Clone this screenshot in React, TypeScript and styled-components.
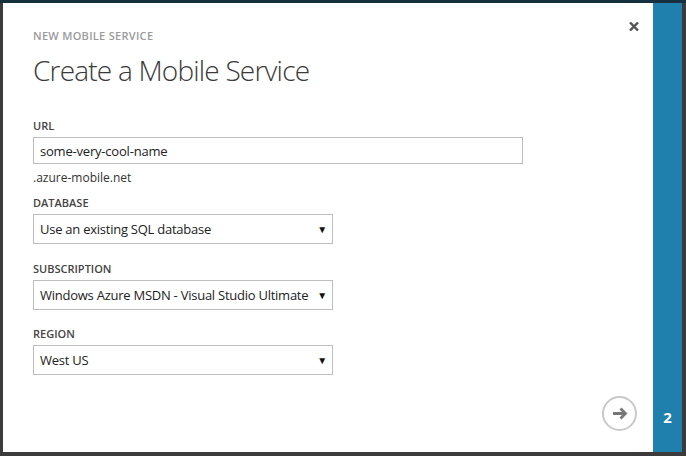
import React from "react";
import styled, { createGlobalStyle } from "styled-components";

const Global = createGlobalStyle`
  html, body { margin: 0; padding: 0; background: #3b3b3b; }
  body { font-family: "Open Sans", "Noto Sans", sans-serif; }
  * { box-sizing: border-box; }
`;

const Page = styled.div`
  width: 686px;
  height: 456px;
  border-top: 3px solid #16303f;
  padding: 0 4px 4px 3px;
  display: flex;
`;

const Modal = styled.div`
  flex: 1;
  display: flex;
  background: #ffffff;
`;

const Content = styled.div`
  flex: 1;
  display: flex;
  flex-direction: column;
  padding: 15px 16px 21px 30px;
`;

const Header = styled.div`
  display: flex;
  justify-content: space-between;
  align-items: flex-start;
`;

const TitleGroup = styled.div`
  padding-top: 10px;
  display: flex;
  flex-direction: column;
`;

const Eyebrow = styled.div`
  font-size: 11px;
  line-height: 16px;
  font-weight: 600;
  color: #9b9b9b;
  letter-spacing: 0.3px;
`;

const Heading = styled.h1`
  margin: 8px 0 0;
  font-size: 28px;
  line-height: 36px;
  font-weight: 300;
  letter-spacing: -0.8px;
  color: #3a3a3a;
`;

const Close = styled.button`
  width: 12px;
  height: 12px;
  margin: 2px -3px 0 0;
  padding: 0;
  border: 0;
  background: transparent;
  display: flex;
  align-items: center;
  justify-content: center;
  cursor: pointer;
`;

const Form = styled.div`
  margin-top: 30px;
  display: flex;
  flex-direction: column;
`;

const Label = styled.div<{ $gap?: number }>`
  margin-top: ${(p) => p.$gap ?? 0}px;
  font-size: 11px;
  line-height: 16px;
  font-weight: 600;
  color: #444;
  text-transform: uppercase;
`;

const TextInput = styled.input`
  margin-top: 3px;
  width: 490px;
  height: 27px;
  border: 1px solid #bdbdbd;
  padding: 0 6px;
  font-family: inherit;
  font-size: 13px;
  letter-spacing: -0.2px;
  color: #222;
  outline: none;
`;

const Hint = styled.div`
  margin-top: 6px;
  font-size: 12px;
  line-height: 16px;
  color: #333;
`;

const Select = styled.div`
  margin-top: 3px;
  width: 300px;
  height: 30px;
  border: 1px solid #bdbdbd;
  padding: 0 5px 0 6px;
  display: flex;
  align-items: center;
  justify-content: space-between;
  font-size: 13px;
  letter-spacing: -0.25px;
  color: #222;
  white-space: nowrap;
`;

const Caret = styled.span`
  font-size: 10px;
  color: #111;
  margin-left: 4px;
`;

const Footer = styled.div`
  margin-top: auto;
  display: flex;
  justify-content: flex-end;
`;

const NextButton = styled.button`
  width: 35px;
  height: 35px;
  border-radius: 50%;
  border: 2px solid #c9c9c9;
  background: #fff;
  padding: 0;
  display: flex;
  align-items: center;
  justify-content: center;
  cursor: pointer;
`;

const Side = styled.div`
  width: 29px;
  background: #1f80ad;
  display: flex;
  flex-direction: column;
  justify-content: flex-end;
  align-items: center;
  padding-bottom: 25px;
`;

const Step = styled.div`
  font-size: 15px;
  line-height: 20px;
  font-weight: 700;
  color: #fff;
`;

const fields = [
  { label: "Database", value: "Use an existing SQL database", gap: 9 },
  { label: "Subscription", value: "Windows Azure MSDN - Visual Studio Ultimate", gap: 17 },
  { label: "Region", value: "West US", gap: 16 },
];

export default function App() {
  return (
    <>
      <Global />
      <Page>
        <Modal>
          <Content>
            <Header>
              <TitleGroup>
                <Eyebrow>NEW MOBILE SERVICE</Eyebrow>
                <Heading>Create a Mobile Service</Heading>
              </TitleGroup>
              <Close aria-label="Close">
                <svg width="10" height="9" viewBox="0 0 10 9">
                  <path d="M1 0.5 L9 8.5 M9 0.5 L1 8.5" stroke="#555" strokeWidth="2.4" />
                </svg>
              </Close>
            </Header>
            <Form>
              <Label>URL</Label>
              <TextInput defaultValue="some-very-cool-name" />
              <Hint>.azure-mobile.net</Hint>
              {fields.map((f) => (
                <React.Fragment key={f.label}>
                  <Label $gap={f.gap}>{f.label}</Label>
                  <Select>
                    <span>{f.value}</span>
                    <Caret>▼</Caret>
                  </Select>
                </React.Fragment>
              ))}
            </Form>
            <Footer>
              <NextButton aria-label="Next">
                <svg width="16" height="13" viewBox="0 0 16 13">
                  <path d="M1 6.5 H13.5 M8.5 1.5 L13.5 6.5 L8.5 11.5" stroke="#777" strokeWidth="2.8" fill="none" />
                </svg>
              </NextButton>
            </Footer>
          </Content>
          <Side>
            <Step>2</Step>
          </Side>
        </Modal>
      </Page>
    </>
  );
}
